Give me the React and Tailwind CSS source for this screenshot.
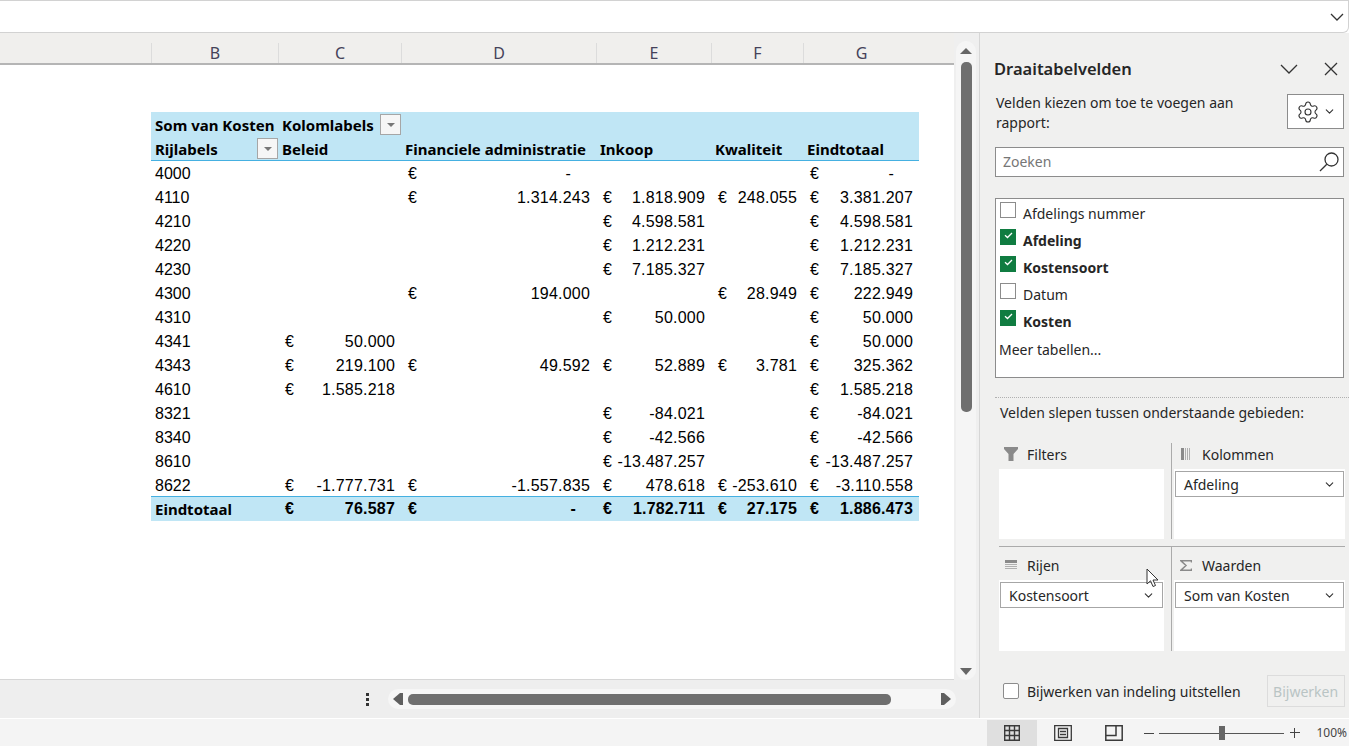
import React from "react";
import { ChevronDown, Settings } from "lucide-react";

const panelFont = { fontFamily: '"Noto Sans", "Open Sans", sans-serif' };

const columns = [
  { label: "B", width: "w-[127px]" },
  { label: "C", width: "w-[123px]" },
  { label: "D", width: "w-[195px]" },
  { label: "E", width: "w-[115px]" },
  { label: "F", width: "w-[92px]" },
  { label: "G", width: "w-[116px]" },
];

const rows = [
  ["4000", "", "-", "", "", "-"],
  ["4110", "", "1.314.243", "1.818.909", "248.055", "3.381.207"],
  ["4210", "", "", "4.598.581", "", "4.598.581"],
  ["4220", "", "", "1.212.231", "", "1.212.231"],
  ["4230", "", "", "7.185.327", "", "7.185.327"],
  ["4300", "", "194.000", "", "28.949", "222.949"],
  ["4310", "", "", "50.000", "", "50.000"],
  ["4341", "50.000", "", "", "", "50.000"],
  ["4343", "219.100", "49.592", "52.889", "3.781", "325.362"],
  ["4610", "1.585.218", "", "", "", "1.585.218"],
  ["8321", "", "", "-84.021", "", "-84.021"],
  ["8340", "", "", "-42.566", "", "-42.566"],
  ["8610", "", "", "-13.487.257", "", "-13.487.257"],
  ["8622", "-1.777.731", "-1.557.835", "478.618", "-253.610", "-3.110.558"],
];

const total = ["Eindtotaal", "76.587", "-", "1.782.711", "27.175", "1.886.473"];

const fields = [
  { name: "Afdelings nummer", checked: false },
  { name: "Afdeling", checked: true },
  { name: "Kostensoort", checked: true },
  { name: "Datum", checked: false },
  { name: "Kosten", checked: true },
];

const FilterButton = () => (
  <div className="ml-auto flex h-[21px] w-[21px] shrink-0 items-center justify-center border border-[#a6a6a6] bg-[#f6f6f6]">
    <div className="h-0 w-0 border-x-[4px] border-t-[4px] border-x-transparent border-t-[#777777]" />
  </div>
);

const MoneyCell = ({ value, width, bold }) => {
  const dashPadding = bold ? "pr-[20px]" : "pr-[25px]";
  return (
    <div className={`flex h-6 items-center justify-between pl-[7px] ${bold ? "" : "pt-[2px]"} ${value === "-" ? dashPadding : "pr-[6px]"} ${width}`}>
      {value && <span>€</span>}
      {value && <span className="tracking-[0.2px]">{value}</span>}
    </div>
  );
};

const DataRow = ({ cells, bold }) => (
  <div
    className={`flex h-6 w-[768px] text-[16px] text-black ${bold ? "bg-[#c0e6f5] font-bold" : ""}`}
    style={{ fontFamily: '"Liberation Sans", Arial, sans-serif' }}
  >
    <div className={`flex h-6 items-center pl-1 ${bold ? "" : "pt-[2px]"} ${columns[0].width}`} style={bold ? panelFont : undefined}>
      {bold ? <span className="text-[15px]">{cells[0]}</span> : cells[0]}
    </div>
    {cells.slice(1).map((value, i) => (
      <MoneyCell key={i} value={value} width={columns[i + 1].width} bold={bold} />
    ))}
  </div>
);

const PivotTable = () => (
  <div className="w-[768px]">
    <div className="flex h-[25px] w-[768px] items-center bg-[#c0e6f5] text-[15px] font-bold text-black" style={panelFont}>
      <div className={`pl-1 pt-[2px] whitespace-nowrap ${columns[0].width}`}>Som van Kosten</div>
      <div className={`flex items-center pl-1 ${columns[1].width}`}>
        <span className="mt-[2px]">Kolomlabels</span>
        <FilterButton />
      </div>
    </div>
    <div className="flex h-6 w-[768px] items-center border-b border-[#45b0e1] bg-[#c0e6f5] text-[15px] font-bold text-black" style={panelFont}>
      <div className={`flex items-center pl-1 ${columns[0].width}`}>
        <span className="mt-[2px]">Rijlabels</span>
        <FilterButton />
      </div>
      <div className={`pl-1 pt-[2px] ${columns[1].width}`}>Beleid</div>
      <div className={`pl-1 pt-[2px] whitespace-nowrap ${columns[2].width}`}>Financiele administratie</div>
      <div className={`pl-1 pt-[2px] ${columns[3].width}`}>Inkoop</div>
      <div className={`pl-1 pt-[2px] ${columns[4].width}`}>Kwaliteit</div>
      <div className={`pl-1 pt-[2px] ${columns[5].width}`}>Eindtotaal</div>
    </div>
    {rows.map((cells) => (
      <DataRow key={cells[0]} cells={cells} />
    ))}
    <div className="relative -mt-px h-px w-[768px] bg-[#45b0e1]" />
    <DataRow cells={total} bold />
  </div>
);

const ColumnHeaders = () => (
  <div className="flex h-[32px] w-full border-b-2 border-[#b5b5b5] bg-[#f0efed] pl-[151px]" style={panelFont}>
    {columns.map((col) => (
      <div
        key={col.label}
        className={`mt-[10px] flex items-center justify-center border-l border-[#dcdcdc] text-[16px] text-[#45425a] ${col.width}`}
      >
        {col.label}
      </div>
    ))}
  </div>
);

const VerticalScrollbar = () => (
  <div className="flex w-[25px] flex-col items-start bg-[#efefef] pt-[8px] pl-[2px]">
    <div className="flex h-[639px] w-[20px] flex-col items-center rounded-[10px] bg-[#f5f5f5] pt-[7px]">
      <div className="h-0 w-0 border-x-[6px] border-b-[6px] border-x-transparent border-b-[#666666]" />
      <div className="mt-[8px] h-[350px] w-[11px] rounded-[5px] bg-[#6f6f6f]" />
      <div className="mt-auto mb-[5px] h-0 w-0 border-x-[6px] border-t-[7px] border-x-transparent border-t-[#666666]" />
    </div>
  </div>
);

const SheetFooter = () => (
  <div className="flex h-[38px] items-center bg-[#eeeeee] pl-[366px]">
    <div className="flex flex-col gap-[2px]">
      <div className="h-[3px] w-[3px] bg-[#333333]" />
      <div className="h-[3px] w-[3px] bg-[#333333]" />
      <div className="h-[3px] w-[3px] bg-[#333333]" />
    </div>
    <div className="ml-[19px] flex h-[20px] w-[568px] items-center rounded-[10px] bg-[#f6f6f6] pl-[5px]">
      <div className="h-0 w-0 border-y-[6px] border-r-[7px] border-y-transparent border-r-[#5f5f5f]" />
      <div className="h-[12px] w-[3px] bg-[#5f5f5f]" />
      <div className="ml-[5px] h-[11px] w-[483px] rounded-[5px] bg-[#6f6f6f]" />
      <div className="ml-[50px] h-[12px] w-[3px] bg-[#5f5f5f]" />
      <div className="h-0 w-0 border-y-[6px] border-l-[7px] border-y-transparent border-l-[#5f5f5f]" />
    </div>
  </div>
);

const FieldRow = ({ name, checked }) => (
  <div className="flex h-[27px] items-start pl-1">
    {checked ? (
      <div className="mt-[3px] flex h-4 w-4 items-start justify-center bg-[#107c41] pt-[3px]">
        <svg width="9" height="7" viewBox="0 0 9 7" fill="none" stroke="white" strokeWidth="1.3">
          <path d="M1 3.2 L3.5 5.5 L8 1" />
        </svg>
      </div>
    ) : (
      <div className="mt-[3px] h-4 w-4 border border-[#8c8c8c] bg-white" />
    )}
    <span className={`ml-[7px] mt-[5px] text-[14px] leading-[20px] text-[#262626] ${checked ? "font-bold" : ""}`}>{name}</span>
  </div>
);

const FieldDropdown = ({ label }) => (
  <div className="mx-[1px] flex h-[26px] items-center justify-between border border-[#a6a6a6] bg-white pl-2 pr-[7px] text-[14px] text-[#262626]">
    {label}
    <ChevronDown size={13} strokeWidth={2} className="text-[#333333]" />
  </div>
);

const FilterIcon = () => (
  <svg width="14" height="14" viewBox="0 0 14 14" fill="#8a8a8a">
    <path d="M0 0 H14 V2 L9.5 7 V14 H4.5 V7 L0 2 Z" />
  </svg>
);

const ColumnsIcon = () => (
  <svg width="10" height="12" viewBox="0 0 10 12" fill="#8a8a8a">
    <rect x="0" width="3" height="12" />
    <rect x="4" width="1" height="12" fill="#b0b0b0" />
    <rect x="6" width="1" height="12" fill="#b0b0b0" />
    <rect x="8" width="1" height="12" fill="#b0b0b0" />
  </svg>
);

const RowsIcon = () => (
  <svg width="12" height="10" viewBox="0 0 12 10" fill="#8a8a8a">
    <rect y="0" width="12" height="3" />
    <rect y="4" width="12" height="1" fill="#b0b0b0" />
    <rect y="6" width="12" height="1" fill="#b0b0b0" />
    <rect y="8" width="12" height="1" fill="#b0b0b0" />
  </svg>
);

const SigmaIcon = () => (
  <svg width="12" height="11" viewBox="0 0 12 11" fill="none" stroke="#8a8a8a" strokeWidth="1.5">
    <path d="M11.5 2.5 V0.8 H1 L6 5.5 L1 10.2 H11.5 V8.5" />
  </svg>
);

const AreaBox = ({ icon, label, children, bodyHeight, labelHeight, iconClass, left }) => (
  <div className={left ? "w-[173px] border-r border-[#ababab] pr-[7px]" : "ml-[2px] w-[171px]"}>
    <div className={`flex items-center text-[14px] text-[#262626] ${labelHeight}`}>
      <div className={`flex w-[28px] items-center ${iconClass}`}>{icon}</div>
      {label}
    </div>
    <div className={`bg-white pt-[2px] ${bodyHeight}`}>{children}</div>
  </div>
);

const PivotPanel = () => (
  <div className="relative flex w-[370px] flex-col border-l border-[#d6d6d6] bg-[#f0f0ef] pt-[23px] pl-[15px]" style={panelFont}>
    <div className="flex h-[26px] items-center pr-[11px]">
      <span className="-ml-px text-[16.5px] font-semibold text-[#262626]">Draaitabelvelden</span>
      <svg className="ml-auto" width="18" height="10" viewBox="0 0 18 10" fill="none" stroke="#333333" strokeWidth="1.3">
        <path d="M1 1 L9 9 L17 1" />
      </svg>
      <svg className="ml-[26px]" width="14" height="14" viewBox="0 0 14 14" fill="none" stroke="#333333" strokeWidth="1.3">
        <path d="M1 1 L13 13 M13 1 L1 13" />
      </svg>
    </div>
    <div className="mt-[12px] flex h-[36px] items-start pl-[1px]">
      <p className="-mt-px w-[270px] text-[14px] leading-[20px] text-[#262626]">Velden kiezen om toe te voegen aan rapport:</p>
      <div className="ml-[21px] flex h-[35px] w-[57px] items-center justify-center gap-[3px] border border-[#8c8c8c] bg-white">
        <Settings size={24} strokeWidth={1.1} className="text-[#333333]" />
        <ChevronDown size={13} strokeWidth={2} className="text-[#333333]" />
      </div>
    </div>
    <div className="mt-[17px] flex h-[30px] w-[349px] items-center justify-between border border-[#8c8c8c] bg-white pb-[1px] pl-[7px] pr-[3px] text-[14px] text-[#767676]">
      Zoeken
      <svg width="22" height="22" viewBox="0 0 22 22" fill="none" stroke="#333333" strokeWidth="1.3">
        <circle cx="13.5" cy="8.5" r="6.5" />
        <path d="M8.8 13.2 L2 20" />
      </svg>
    </div>
    <div className="mt-[21px] h-[180px] w-[349px] border border-[#8c8c8c] bg-white">
      {fields.map((field) => (
        <FieldRow key={field.name} name={field.name} checked={field.checked} />
      ))}
      <div className="mt-[6px] pl-[3px] text-[14px] leading-[20px] text-[#262626]">Meer tabellen...</div>
    </div>
    <div className="mt-[19px] h-px w-[354px] border-t border-dotted border-[#b0b0b0]" />
    <div className="mt-[5px] pl-[5px] text-[14px] leading-[20px] text-[#262626]">Velden slepen tussen onderstaande gebieden:</div>
    <div className="ml-[4px] mt-[20px] flex w-[346px]">
      <AreaBox left icon={<FilterIcon />} label="Filters" bodyHeight="h-[70px]" labelHeight="h-[26px] pb-[4px]" iconClass="pl-[5px]" />
      <AreaBox icon={<ColumnsIcon />} label="Kolommen" bodyHeight="h-[70px]" labelHeight="h-[26px] pb-[4px]" iconClass="pl-[7px]">
        <FieldDropdown label="Afdeling" />
      </AreaBox>
    </div>
    <div className="ml-[4px] mt-[7px] h-px w-[346px] bg-[#ababab]" />
    <div className="ml-[4px] flex w-[346px]">
      <AreaBox left icon={<RowsIcon />} label="Rijen" bodyHeight="h-[71px]" labelHeight="h-[33px] pt-[3px]" iconClass="pl-[6px]">
        <FieldDropdown label="Kostensoort" />
      </AreaBox>
      <AreaBox icon={<SigmaIcon />} label="Waarden" bodyHeight="h-[71px]" labelHeight="h-[33px] pt-[3px]" iconClass="pl-[6px]">
        <FieldDropdown label="Som van Kosten" />
      </AreaBox>
    </div>
    <div className="mt-[24px] flex h-[32px] items-center pl-[8px]">
      <div className="h-4 w-4 rounded-[2px] border border-[#8c8c8c] bg-white" />
      <span className="ml-[8px] text-[14px] text-[#262626]">Bijwerken van indeling uitstellen</span>
      <div className="ml-[26px] flex h-[32px] w-[78px] items-center justify-center border border-[#dcdcdc] text-[14px] text-[#b9c4c4]">
        Bijwerken
      </div>
    </div>
  </div>
);

const GridIcon = () => (
  <svg width="16" height="16" viewBox="0 0 16 16" fill="none" stroke="#3a3a3a" strokeWidth="1.4">
    <path d="M0.7 0.7 H15.3 V15.3 H0.7 Z M0.7 5.5 H15.3 M0.7 10.5 H15.3 M5.5 0.7 V15.3 M10.5 0.7 V15.3" />
  </svg>
);

const PageIcon = () => (
  <svg width="18" height="16" viewBox="0 0 18 16" fill="none" stroke="#3a3a3a" strokeWidth="1.3">
    <path d="M0.7 0.7 H17.3 V15.3 H0.7 Z M4.5 3.5 H13.5 V12.5 H4.5 Z M6 6.5 H12 M6 9.5 H12" />
  </svg>
);

const BreakIcon = () => (
  <svg width="18" height="16" viewBox="0 0 18 16" fill="none" stroke="#3a3a3a" strokeWidth="1.5">
    <path d="M0.8 0.8 H17.2 V15.2 H0.8 Z M0.8 10.5 H11 V0.8" />
  </svg>
);

const StatusBar = () => (
  <div className="flex h-[28px] items-end justify-end border-t border-white bg-[#f4f4f4] pr-[2px]" style={panelFont}>
    <div className="flex h-[26px] w-[50px] items-center justify-center bg-[#dfdfdf]">
      <GridIcon />
    </div>
    <div className="flex h-[26px] w-[51px] items-center justify-center">
      <PageIcon />
    </div>
    <div className="flex h-[26px] w-[51px] items-center justify-center">
      <BreakIcon />
    </div>
    <div className="flex h-[26px] items-center text-[#444444]">
      <div className="ml-[5px] h-px w-[10px] bg-[#444444]" />
      <div className="relative ml-[5px] flex h-[14px] w-[125px] items-center justify-center">
        <div className="h-px w-full bg-[#555555]" />
        <div className="absolute left-[60px] h-[14px] w-[6px] bg-[#666666]" />
      </div>
      <div className="relative ml-[6px] h-[10px] w-[10px]">
        <div className="absolute top-[4px] h-px w-[10px] bg-[#444444]" />
        <div className="absolute left-[4px] h-[10px] w-px bg-[#444444]" />
      </div>
      <span className="ml-[16px] text-[12px]">100%</span>
    </div>
  </div>
);

const Cursor = () => (
  <svg className="absolute left-[1146px] top-[568px]" width="13" height="20" viewBox="0 0 13 20" fill="white" stroke="#333333" strokeWidth="1">
    <path d="M1 1 V16 L4.5 12.8 L7 18.5 L9.5 17.5 L7 12 H12 Z" />
  </svg>
);

export default function App() {
  return (
    <div className="relative h-[746px] w-[1349px] overflow-hidden bg-white">
      <div className="flex h-[33px] items-center justify-end rounded-br-[6px] border-y border-r border-[#d2d2d2] bg-white pr-[4px]">
        <svg width="14" height="8" viewBox="0 0 14 8" fill="none" stroke="#333333" strokeWidth="1.3">
          <path d="M1 1 L7 7 L13 1" />
        </svg>
      </div>
      <div className="flex h-[685px]">
        <div className="flex w-[979px] flex-col">
          <div className="flex min-h-0 flex-1">
            <div className="flex w-[954px] flex-col">
              <ColumnHeaders />
              <div className="flex-1 border-b border-[#d6d6d6] bg-white pt-[47px] pl-[151px]">
                <PivotTable />
              </div>
            </div>
            <VerticalScrollbar />
          </div>
          <SheetFooter />
        </div>
        <PivotPanel />
      </div>
      <StatusBar />
      <Cursor />
    </div>
  );
}
